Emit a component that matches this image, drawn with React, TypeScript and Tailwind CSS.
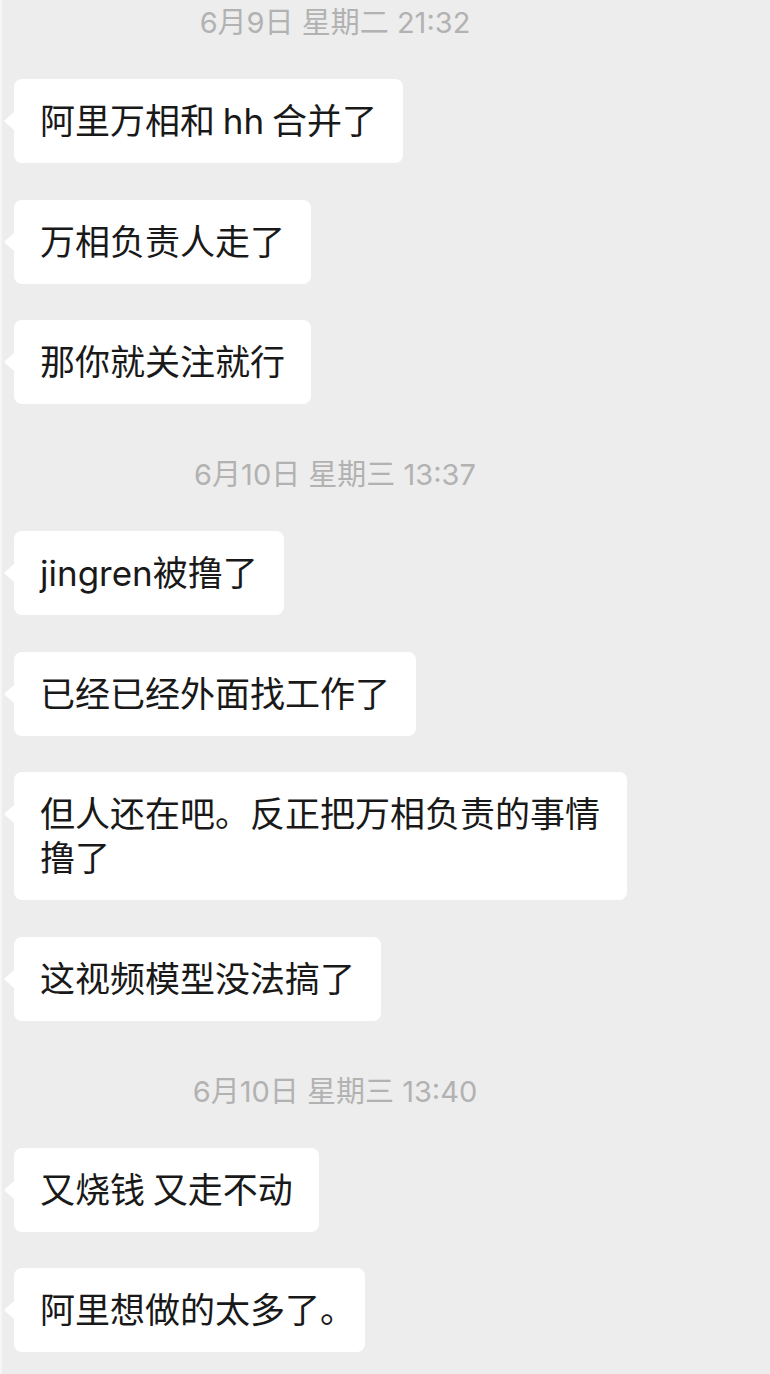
import React from "react";

const font = { fontFamily: 'Inter, "Noto Sans CJK SC", sans-serif' };

function Stamp({ text, first }: { text: string; first?: boolean }) {
  return (
    <div
      className={`w-[670px] text-center text-[29px] leading-[30px] text-[#b2b2b2] ${
        first ? "mt-0 mb-[41px]" : "mt-[56px] mb-[41px]"
      }`}
    >
      {text}
    </div>
  );
}

function Bubble({
  children,
  first,
}: {
  children: React.ReactNode;
  first?: boolean;
}) {
  return (
    <div className={`flex ${first ? "" : "mt-[36.5px]"}`}>
      <div className="relative ml-[14px] max-w-[613px] rounded-[8px] bg-white px-[26px] py-[20px] text-[35px] leading-[44px] text-[#191919] [word-spacing:-2px]">
        <span className="absolute left-[-10px] top-[33px] h-0 w-0 border-y-[9px] border-r-[10px] border-y-transparent border-r-white" />
        {children}
      </div>
    </div>
  );
}

export default function App() {
  return (
    <div
      className="min-h-[1374px] w-[770px] overflow-hidden border-l-2 border-[#f6f6f6] bg-[#ededed] pt-[8px]"
      style={font}
    >
      <div className="-ml-[2px]">
        <Stamp text="6月9日 星期二 21:32" first />
        <Bubble first>阿里万相和 hh 合并了</Bubble>
        <Bubble>万相负责人走了</Bubble>
        <Bubble>那你就关注就行</Bubble>
        <Stamp text="6月10日 星期三 13:37" />
        <Bubble first>jingren被撸了</Bubble>
        <Bubble>已经已经外面找工作了</Bubble>
        <Bubble>但人还在吧。反正把万相负责的事情撸了</Bubble>
        <Bubble>这视频模型没法搞了</Bubble>
        <Stamp text="6月10日 星期三 13:40" />
        <Bubble first>又烧钱 又走不动</Bubble>
        <Bubble>
          阿里想做的太多了<span className="tracking-[-16px]">。</span>
        </Bubble>
      </div>
    </div>
  );
}
